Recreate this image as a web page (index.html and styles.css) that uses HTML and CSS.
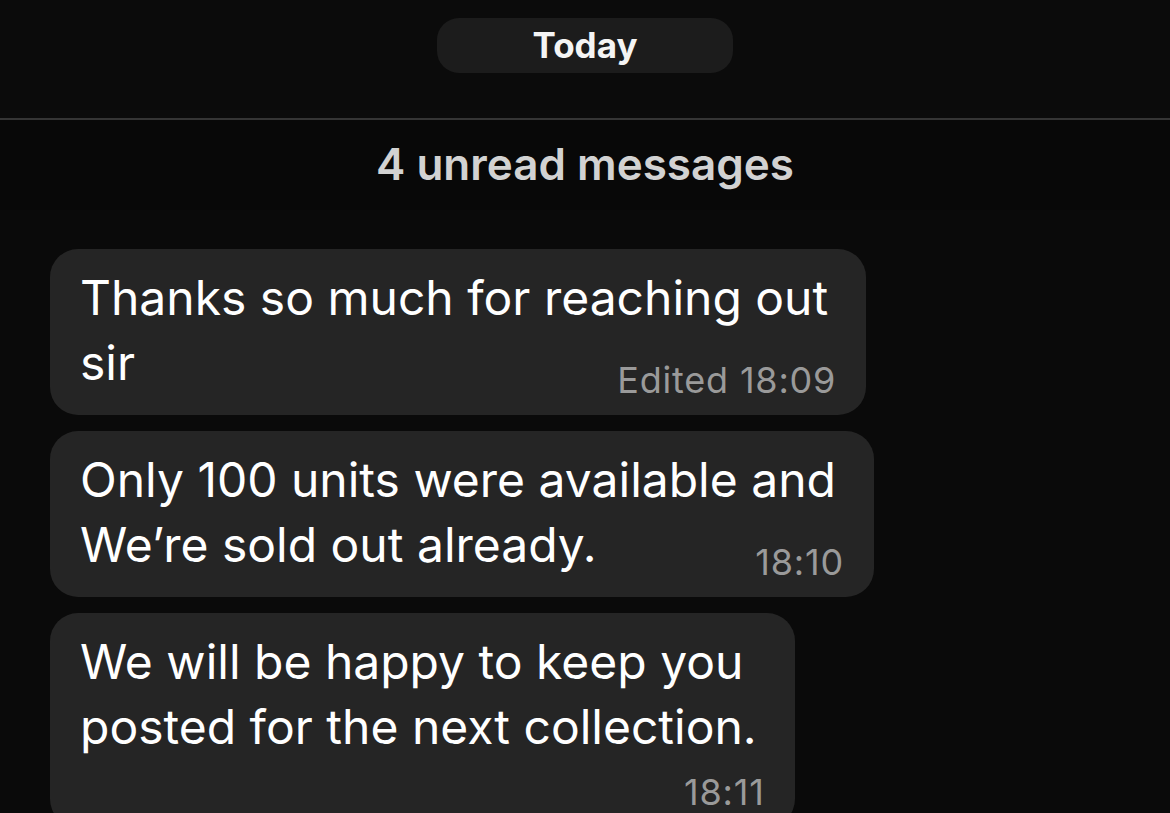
FILE: index.html
```html
<!DOCTYPE html>
<html lang="en">
<head>
  <meta charset="UTF-8">
  <title>Chat</title>
  <link rel="stylesheet" href="styles.css">
</head>
<body>
  <div class="top">
    <div class="date-pill">Today</div>
  </div>
  <div class="unread">4 unread messages</div>

  <div class="messages">
    <div class="bubble">
      <div class="line">Thanks so much for reaching out</div>
      <div class="last-row">
        <span class="line">sir</span>
        <span class="time">Edited 18:09</span>
      </div>
    </div>

    <div class="bubble">
      <div class="line">Only 100 units were available and</div>
      <div class="last-row">
        <span class="line">We’re sold out already.</span>
        <span class="time">18:10</span>
      </div>
    </div>

    <div class="bubble">
      <div class="line">We will be happy to keep you</div>
      <div class="line">posted for the next collection.</div>
      <div class="last-row time-only">
        <span class="time">18:11</span>
      </div>
    </div>
  </div>
</body>
</html>
```
FILE: styles.css
```css
html, body {
  margin: 0;
  padding: 0;
  background: #0a0a0a;
  height: 100%;
  overflow: hidden;
}
body {
  font-family: Inter, "Noto Sans", sans-serif;
  color: #fff;
}
/* date header */
.top {
  height: 120px;
  background: #0b0b0b;
  border-bottom: 2px solid #353535;
  display: flex;
  justify-content: center;
  padding-top: 18px;
  box-sizing: border-box;
}
.date-pill {
  width: 296px;
  height: 55px;
  border-radius: 22px;
  background: #1c1c1c;
  color: #f4f4f4;
  font-weight: 700;
  font-size: 35px;
  line-height: 55px;
  text-align: center;
}
/* unread band */
.unread {
  height: 90px;
  background: #080808;
  color: #d2d2d2;
  font-size: 44px;
  font-weight: 600;
  line-height: 88px;
  text-align: center;
}
/* message list */
.messages {
  display: flex;
  flex-direction: column;
  align-items: flex-start;
  gap: 16px;
  padding: 39px 0 0 50px;
}
.bubble {
  background: #252525;
  border-radius: 28px;
  padding: 16px 30px 20px 30px;
  font-size: 48px;
  line-height: 65px;
  white-space: nowrap;
}
.bubble > .line {
  padding-right: 8px;
}
.last-row {
  display: flex;
  align-items: flex-end;
  justify-content: space-between;
  gap: 30px;
}
.time-only {
  height: 48px;
  justify-content: flex-end;
}
.time {
  font-size: 36px;
  line-height: 36px;
  color: #9a9a9a;
  letter-spacing: 0.8px;
  position: relative;
  top: 3px;
}
```
